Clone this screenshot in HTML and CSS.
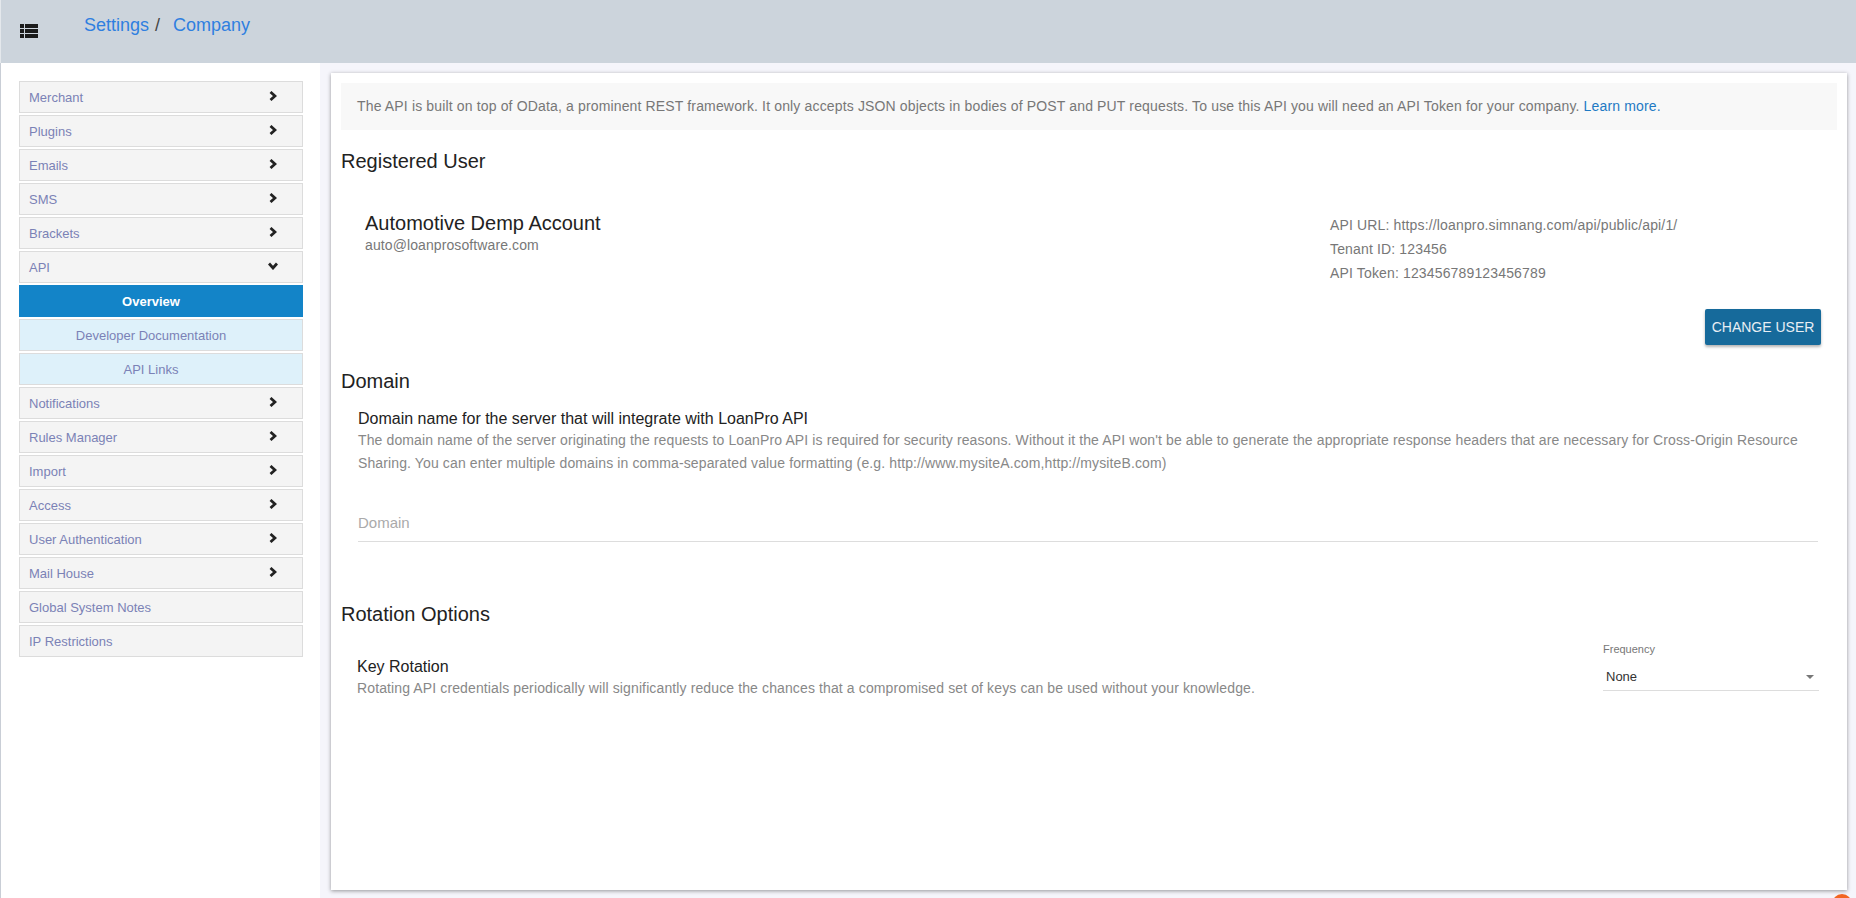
FILE: index.html
```html
<!DOCTYPE html>
<html lang="en">
<head>
    <meta charset="UTF-8">
    <meta name="viewport" content="width=device-width, initial-scale=1.0">
    <title>Settings / Company</title>
    <link rel="stylesheet" href="styles.css">
</head>
<body>
    <header class="topbar">
        <button class="menu-toggle" aria-label="Menu">
            <svg width="18" height="14" viewBox="0 0 18 14">
                <rect x="0" y="0" width="4" height="4"/>
                <rect x="5" y="0" width="13" height="4"/>
                <rect x="0" y="5" width="4" height="4"/>
                <rect x="5" y="5" width="13" height="4"/>
                <rect x="0" y="10" width="4" height="4"/>
                <rect x="5" y="10" width="13" height="4"/>
            </svg>
        </button>
        <nav class="breadcrumb">
            <a href="#">Settings</a><span class="sep">/</span><a href="#">Company</a>
        </nav>
    </header>

    <div class="layout">
        <aside class="sidebar">
            <ul class="side-menu">
                <li class="menu-item">Merchant <svg class="chev" width="8" height="10" viewBox="0 0 8 10"><polyline points="1.5,1 6,5 1.5,9"/></svg></li>
                <li class="menu-item">Plugins <svg class="chev" width="8" height="10" viewBox="0 0 8 10"><polyline points="1.5,1 6,5 1.5,9"/></svg></li>
                <li class="menu-item">Emails <svg class="chev" width="8" height="10" viewBox="0 0 8 10"><polyline points="1.5,1 6,5 1.5,9"/></svg></li>
                <li class="menu-item">SMS <svg class="chev" width="8" height="10" viewBox="0 0 8 10"><polyline points="1.5,1 6,5 1.5,9"/></svg></li>
                <li class="menu-item">Brackets <svg class="chev" width="8" height="10" viewBox="0 0 8 10"><polyline points="1.5,1 6,5 1.5,9"/></svg></li>
                <li class="menu-item">API <svg class="chev down" width="10" height="8" viewBox="0 0 10 8"><polyline points="1,1.5 5,6 9,1.5"/></svg></li>
                <li class="sub-item active">Overview</li>
                <li class="sub-item">Developer Documentation</li>
                <li class="sub-item">API Links</li>
                <li class="menu-item">Notifications <svg class="chev" width="8" height="10" viewBox="0 0 8 10"><polyline points="1.5,1 6,5 1.5,9"/></svg></li>
                <li class="menu-item">Rules Manager <svg class="chev" width="8" height="10" viewBox="0 0 8 10"><polyline points="1.5,1 6,5 1.5,9"/></svg></li>
                <li class="menu-item">Import <svg class="chev" width="8" height="10" viewBox="0 0 8 10"><polyline points="1.5,1 6,5 1.5,9"/></svg></li>
                <li class="menu-item">Access <svg class="chev" width="8" height="10" viewBox="0 0 8 10"><polyline points="1.5,1 6,5 1.5,9"/></svg></li>
                <li class="menu-item">User Authentication <svg class="chev" width="8" height="10" viewBox="0 0 8 10"><polyline points="1.5,1 6,5 1.5,9"/></svg></li>
                <li class="menu-item">Mail House <svg class="chev" width="8" height="10" viewBox="0 0 8 10"><polyline points="1.5,1 6,5 1.5,9"/></svg></li>
                <li class="menu-item">Global System Notes</li>
                <li class="menu-item">IP Restrictions</li>
            </ul>
        </aside>

        <main class="content">
            <section class="card">
                <div class="notice">
                    The API is built on top of OData, a prominent REST framework. It only accepts JSON objects in bodies of POST and PUT requests. To use this API you will need an API Token for your company. <a href="#">Learn more.</a>
                </div>

                <h2 class="section-title">Registered User</h2>
                <div class="user-row">
                    <div class="user-info">
                        <div class="user-name">Automotive Demp Account</div>
                        <div class="user-email">auto@loanprosoftware.com</div>
                    </div>
                    <div class="api-info">
                        <div>API URL: https://loanpro.simnang.com/api/public/api/1/</div>
                        <div>Tenant ID: 123456</div>
                        <div>API Token: 123456789123456789</div>
                    </div>
                </div>
                <div class="actions">
                    <button class="btn-primary">CHANGE USER</button>
                </div>

                <h2 class="section-title domain-title">Domain</h2>
                <div class="field-block">
                    <div class="field-title">Domain name for the server that will integrate with LoanPro API</div>
                    <p class="field-desc">The domain name of the server originating the requests to LoanPro API is required for security reasons. Without it the API won't be able to generate the appropriate response headers that are necessary for Cross-Origin Resource Sharing. You can enter multiple domains in comma-separated value formatting (e.g. http://www.mysiteA.com,http://mysiteB.com)</p>
                    <input class="text-input" type="text" placeholder="Domain">
                </div>

                <h2 class="section-title rotation-title">Rotation Options</h2>
                <div class="rotation-row">
                    <div class="rotation-text">
                        <div class="field-title">Key Rotation</div>
                        <p class="field-desc">Rotating API credentials periodically will significantly reduce the chances that a compromised set of keys can be used without your knowledge.</p>
                    </div>
                    <div class="select-field">
                        <label class="select-label">Frequency</label>
                        <div class="select-box">
                            <span>None</span>
                            <span class="caret"></span>
                        </div>
                    </div>
                </div>
            </section>
        </main>
    </div>

    <span class="help-bubble"></span>
</body>
</html>
```

FILE: styles.css
```css
* {
    box-sizing: border-box;
}

body {
    margin: 0;
    height: 898px;
    overflow: hidden;
    font-family: "Liberation Sans", Arial, sans-serif;
    background-color: #f5f5fb;
}

.topbar {
    display: flex;
    align-items: flex-start;
    height: 63px;
    padding: 0 19px;
    background-color: #ccd4dc;
    border-left: 1px solid #e4e8ec;
}

.menu-toggle {
    margin-top: 24px;
    padding: 0;
    border: none;
    background: none;
    line-height: 0;
}

.menu-toggle svg {
    fill: #1b1b1b;
}

.breadcrumb {
    margin-top: 14px;
    margin-left: 46px;
    font-size: 18px;
    line-height: 22px;
}

.breadcrumb a {
    color: #2f7fe0;
    text-decoration: none;
}

.breadcrumb .sep {
    color: #444;
    margin: 0 13px 0 6px;
}

.layout {
    display: flex;
    height: 835px;
}

.sidebar {
    width: 320px;
    flex-shrink: 0;
    background-color: #fff;
    border-left: 1px solid #c9ced6;
    padding: 18px 17px 0 18px;
}

.side-menu {
    list-style: none;
    margin: 0;
    padding: 0;
    display: flex;
    flex-direction: column;
    gap: 2px;
}

.menu-item,
.sub-item {
    height: 32px;
    border: 1px solid #dcdcdc;
    font-size: 13px;
    color: #7b82b6;
}

.menu-item {
    display: flex;
    align-items: center;
    justify-content: space-between;
    padding: 0 25px 0 9px;
    background-color: #f4f4f4;
}

.chev {
    fill: none;
    stroke: #222;
    stroke-width: 2.8;
    margin-top: -2px;
}

.chev.down {
    margin-right: -1px;
}

.sub-item {
    display: flex;
    align-items: center;
    justify-content: center;
    padding-right: 20px;
    background-color: #def1fa;
}

.sub-item.active {
    background-color: #1384c8;
    border-color: #1384c8;
    color: #fff;
    font-weight: bold;
}

.content {
    flex: 1;
    display: flex;
    padding: 10px 9px 8px 11px;
}

.card {
    flex: 1;
    background-color: #fff;
    padding: 10px;
    box-shadow: 0 1px 4px rgba(0, 0, 0, 0.4);
}

.notice {
    height: 47px;
    line-height: 47px;
    padding: 0 16px;
    background-color: #f8f8f8;
    font-size: 14px;
    letter-spacing: 0.15px;
    color: #777;
    white-space: nowrap;
}

.notice a {
    color: #1f7ac4;
    text-decoration: none;
}

.section-title {
    margin: 19px 0 0;
    font-size: 20px;
    font-weight: normal;
    line-height: 24px;
    color: #222;
}

.user-row {
    display: flex;
    justify-content: space-between;
    margin-top: 39px;
}

.user-info {
    padding-left: 24px;
}

.user-name {
    font-size: 20px;
    line-height: 22px;
    color: #222;
}

.user-email {
    margin-top: 2px;
    font-size: 14px;
    line-height: 18px;
    letter-spacing: 0.1px;
    color: #777;
}

.api-info {
    width: 507px;
    font-size: 14px;
    line-height: 24px;
    letter-spacing: 0.15px;
    color: #777;
    margin-top: 1px;
}

.actions {
    display: flex;
    justify-content: flex-end;
    margin-top: 24px;
    padding-right: 16px;
}

.btn-primary {
    width: 116px;
    height: 36px;
    padding: 0;
    border: none;
    border-radius: 2px;
    background-color: #166a9b;
    color: #e8eef4;
    font-family: "Liberation Sans", Arial, sans-serif;
    font-size: 14px;
    box-shadow: 0 2px 3px rgba(0, 0, 0, 0.3);
}

.domain-title {
    margin-top: 24px;
}

.field-block {
    padding-left: 17px;
}

.field-title {
    margin-top: 16px;
    font-size: 16px;
    line-height: 20px;
    color: #222;
}

.field-desc {
    margin: 0;
    font-size: 14px;
    line-height: 22.5px;
    letter-spacing: 0.12px;
    color: #888;
}

.text-input {
    display: block;
    width: calc(100% - 19px);
    height: 39px;
    margin-top: 29px;
    padding: 0;
    border: none;
    border-bottom: 1px solid #ddd;
    font-family: "Liberation Sans", Arial, sans-serif;
    font-size: 15px;
    outline: none;
}

.text-input::placeholder {
    color: #aaa;
}

.rotation-title {
    margin-top: 60px;
}

.rotation-row {
    display: flex;
    justify-content: space-between;
    margin-top: 16px;
    padding: 0 18px 0 16px;
}

.rotation-text {
    padding-top: 15px;
}

.rotation-text .field-title {
    margin-top: 0;
}

.select-field {
    width: 216px;
}

.select-label {
    display: block;
    font-size: 11px;
    line-height: 14px;
    color: #777;
}

.select-box {
    display: flex;
    align-items: flex-end;
    justify-content: space-between;
    height: 35px;
    padding: 0 5px 5px 3px;
    border-bottom: 1px solid #ddd;
    font-size: 13px;
    line-height: 16px;
    color: #333;
}

.caret {
    width: 0;
    height: 0;
    margin-bottom: 6px;
    border-left: 4px solid transparent;
    border-right: 4px solid transparent;
    border-top: 4px solid #777;
}

.help-bubble {
    position: fixed;
    right: 4px;
    bottom: -16px;
    width: 20px;
    height: 20px;
    border-radius: 50%;
    background-color: #f26522;
}
```
